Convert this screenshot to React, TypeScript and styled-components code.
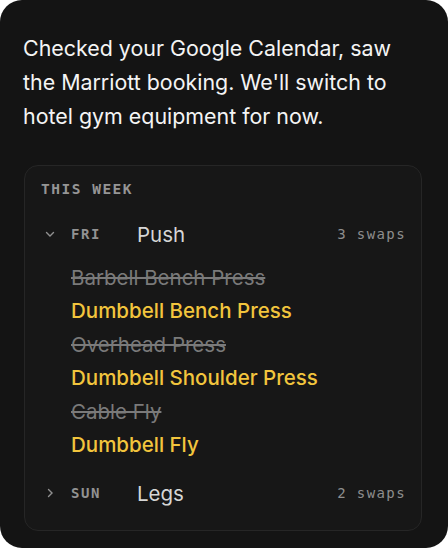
import styled, { createGlobalStyle } from "styled-components";

const Global = createGlobalStyle`
  html, body {
    margin: 0;
    background: #ffffff;
  }
`;

type Swap = { from: string; to: string };
type Day = { day: string; name: string; swaps: number; open: boolean; items: Swap[] };

const DAYS: Day[] = [
  {
    day: "FRI",
    name: "Push",
    swaps: 3,
    open: true,
    items: [
      { from: "Barbell Bench Press", to: "Dumbbell Bench Press" },
      { from: "Overhead Press", to: "Dumbbell Shoulder Press" },
      { from: "Cable Fly", to: "Dumbbell Fly" },
    ],
  },
  { day: "SUN", name: "Legs", swaps: 2, open: false, items: [] },
];

const MONO = `"DejaVu Sans Mono", "Liberation Mono", monospace`;

const Card = styled.div`
  box-sizing: border-box;
  width: 448px;
  height: 548px;
  background: #141414;
  border-radius: 22px;
  padding: 31px 23px 0 23px;
  font-family: Inter, "Noto Sans", sans-serif;
`;

const Message = styled.p`
  margin: 0;
  color: #f4f4f4;
  font-size: 21.4px;
  line-height: 34px;
`;

const Panel = styled.div`
  display: flex;
  flex-direction: column;
  margin: 32px 3px 0 1px;
  padding: 14px 16px 20px 16px;
  border: 1px solid #262626;
  border-radius: 14px;
  background: #171717;
`;

const Eyebrow = styled.div`
  font-family: ${MONO};
  font-weight: 700;
  font-size: 14.5px;
  line-height: 18px;
  letter-spacing: 1.5px;
  color: #959595;
  margin-bottom: 4px;
`;

const DayBlock = styled.div`
  display: flex;
  flex-direction: column;
  padding-top: 15px;
`;

const DayRow = styled.div`
  display: flex;
  align-items: center;
  height: 34px;
`;

const Chevron = styled.svg`
  width: 12px;
  height: 12px;
  margin-left: 3px;
  margin-right: 15px;
  color: #909090;
`;

const DayCode = styled.span`
  width: 66px;
  font-family: ${MONO};
  font-weight: 700;
  font-size: 14px;
  letter-spacing: 1.6px;
  color: #929292;
`;

const DayName = styled.span`
  flex: 1;
  font-size: 20.5px;
  color: #d6d6d6;
`;

const SwapCount = styled.span`
  font-family: ${MONO};
  font-size: 14px;
  letter-spacing: 1.4px;
  margin-right: -1px;
  color: #8e8e8e;
`;

const List = styled.div`
  display: flex;
  flex-direction: column;
  padding: 10px 0 0 30px;
`;

const Item = styled.div<{ $old?: boolean }>`
  font-size: 20.5px;
  line-height: 33.4px;
  font-weight: ${(p) => (p.$old ? 400 : 500)};
  color: ${(p) => (p.$old ? "#7a7a7a" : "#f2c53d")};
  text-decoration: ${(p) => (p.$old ? "line-through" : "none")};
  text-decoration-thickness: 1.5px;
`;

function ChevronIcon({ open }: { open: boolean }) {
  return (
    <Chevron viewBox="0 0 12 12" fill="none" stroke="currentColor" strokeWidth="1.4" strokeLinecap="round">
      {open ? <path d="M2.5 4.5 6 8l3.5-3.5" /> : <path d="M4.5 2.5 8 6l-3.5 3.5" />}
    </Chevron>
  );
}

export default function App() {
  return (
    <>
      <Global />
      <Card>
        <Message>
          Checked your Google Calendar, saw the Marriott booking. We'll switch to hotel gym equipment for
          now.
        </Message>
        <Panel>
          <Eyebrow>THIS WEEK</Eyebrow>
          {DAYS.map((d) => (
            <DayBlock key={d.day}>
              <DayRow>
                <ChevronIcon open={d.open} />
                <DayCode>{d.day}</DayCode>
                <DayName>{d.name}</DayName>
                <SwapCount>{d.swaps} swaps</SwapCount>
              </DayRow>
              {d.open && (
                <List>
                  {d.items.map((s) => (
                    <div key={s.from}>
                      <Item $old>{s.from}</Item>
                      <Item>{s.to}</Item>
                    </div>
                  ))}
                </List>
              )}
            </DayBlock>
          ))}
        </Panel>
      </Card>
    </>
  );
}
